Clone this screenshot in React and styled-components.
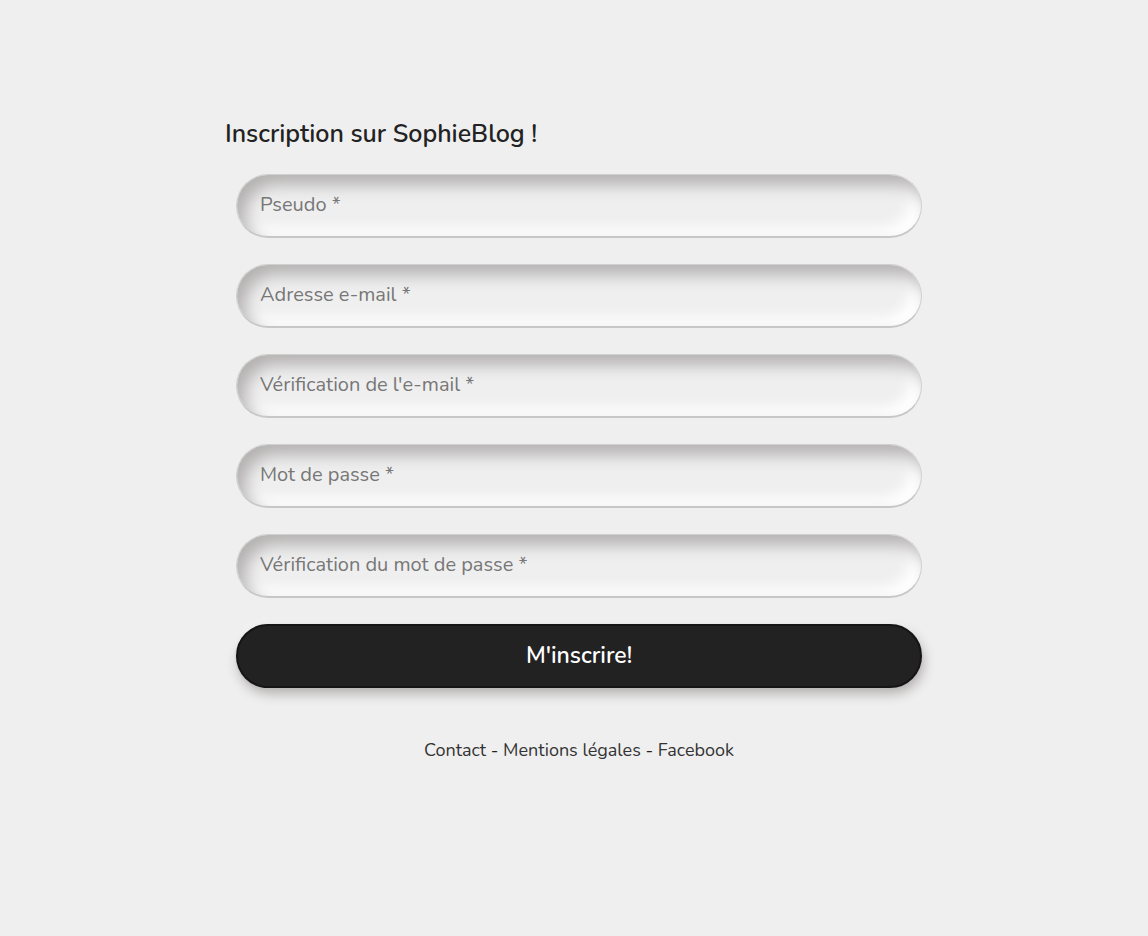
import React from "react";
import styled, { createGlobalStyle, css } from "styled-components";

const GlobalStyle = createGlobalStyle`
  * { box-sizing: border-box; }
  body {
    margin: 0;
    background: #efefef;
    color: #222;
    font-family: Nunito, Lato, "Noto Sans", sans-serif;
  }
`;

const Page = styled.div`
  padding: 116px 0 48px 10px;
`;

const Container = styled.main`
  width: 100%;
  max-width: 708px;
  margin: 0 auto;
`;

const Title = styled.h1`
  margin: 0 0 22px;
  font-size: 25px;
  line-height: 36px;
  font-weight: 600;
`;

const Form = styled.form`
  display: flex;
  flex-direction: column;
  gap: 26px;
  padding: 0 11px;
`;

const pill = css`
  display: block;
  width: 100%;
  height: 64px;
  border-radius: 32px;
  font-family: inherit;
  outline: none;
`;

const Field = styled.input`
  ${pill}
  padding: 0 23px 2px;
  border: 1px solid #d0d0d0;
  border-bottom: 2px solid #c8c7c7;
  background: #efefef;
  color: #222;
  font-size: 20px;
  box-shadow: inset 8px 10px 16px #b4b1b1, inset -10px -8px 14px #fff;

  &::placeholder {
    color: #777;
    opacity: 1;
  }
`;

const SubmitButton = styled.button`
  ${pill}
  padding: 0 24px 2px;
  border: 2px solid #151515;
  background: #222;
  color: #fff;
  font-size: 23px;
  font-weight: 600;
  cursor: pointer;
  box-shadow: 0 1px 2px #bbb, 2px 6px 12px #b5b0b0, -2px -2px 6px #f8f8f8;
`;

const Footer = styled.footer`
  margin-top: 50px;
  text-align: center;
  font-size: 18px;
  line-height: 24px;
`;

const FooterLink = styled.a`
  color: #333;
  text-decoration: none;
`;

const fields = [
  { name: "pseudo", type: "text", label: "Pseudo *" },
  { name: "email", type: "email", label: "Adresse e-mail *" },
  { name: "emailConfirm", type: "email", label: "Vérification de l'e-mail *" },
  { name: "password", type: "password", label: "Mot de passe *" },
  { name: "passwordConfirm", type: "password", label: "Vérification du mot de passe *" },
];

export default function App() {
  return (
    <Page>
      <GlobalStyle />
      <Container>
        <Title>Inscription sur SophieBlog !</Title>
        <Form onSubmit={(event) => event.preventDefault()}>
          {fields.map(({ name, type, label }) => (
            <Field key={name} name={name} type={type} placeholder={label} aria-label={label} required />
          ))}
          <SubmitButton type="submit">M'inscrire!</SubmitButton>
        </Form>
        <Footer>
          <FooterLink href="#contact">Contact</FooterLink> -{" "}
          <FooterLink href="#mentions-legales">Mentions légales</FooterLink> -{" "}
          <FooterLink href="#facebook">Facebook</FooterLink>
        </Footer>
      </Container>
    </Page>
  );
}
